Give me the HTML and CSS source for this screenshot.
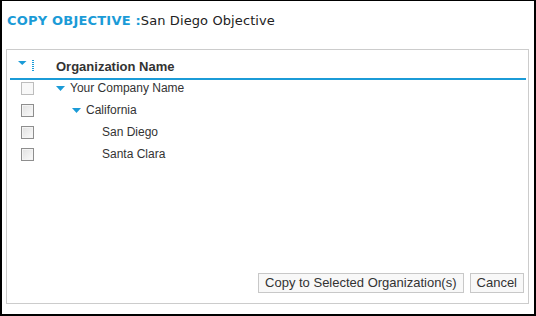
FILE: index.html
```html
<!DOCTYPE html>
<html lang="en">
<head>
    <meta charset="UTF-8">
    <title>Copy Objective</title>
    <link rel="stylesheet" href="styles.css">
</head>
<body>

<div class="dialog">
    <h1 class="dialog-title"><span class="title-label">COPY OBJECTIVE :</span>San Diego Objective</h1>

    <div class="grid-panel">
        <div class="grid-head">
            <div class="col-check">
                <svg class="head-icon" width="17" height="12" viewBox="0 0 17 12">
                    <polygon points="0,1 8.5,1 4.25,5" fill="#1b9bd7"/>
                    <line x1="15" y1="0" x2="15" y2="12" stroke="#1b9bd7" stroke-width="2" stroke-dasharray="1 1"/>
                </svg>
            </div>
            <div class="col-name">Organization Name</div>
        </div>

        <div class="grid-body">
            <div class="grid-row">
                <div class="col-check"><span class="checkbox disabled"></span></div>
                <div class="col-name level-0">
                    <svg class="toggle" width="9" height="5" viewBox="0 0 9 5"><polygon points="0,0 9,0 4.5,5" fill="#1b9bd7"/></svg>
                    Your Company Name
                </div>
            </div>
            <div class="grid-row">
                <div class="col-check"><span class="checkbox"></span></div>
                <div class="col-name level-1">
                    <svg class="toggle" width="9" height="5" viewBox="0 0 9 5"><polygon points="0,0 9,0 4.5,5" fill="#1b9bd7"/></svg>
                    California
                </div>
            </div>
            <div class="grid-row">
                <div class="col-check"><span class="checkbox"></span></div>
                <div class="col-name level-2"><span class="toggle"></span>San Diego</div>
            </div>
            <div class="grid-row">
                <div class="col-check"><span class="checkbox"></span></div>
                <div class="col-name level-2"><span class="toggle"></span>Santa Clara</div>
            </div>
        </div>

        <div class="grid-actions">
            <button type="button">Copy to Selected Organization(s)</button>
            <button type="button">Cancel</button>
        </div>
    </div>
</div>

</body>
</html>
```

FILE: styles.css
```css
body {
    margin: 0;
    background: #fff;
    font-family: 'Liberation Sans', Arial, sans-serif;
}

/* Outer dialog frame */
.dialog {
    width: 536px;
    height: 316px;
    box-sizing: border-box;
    border: 2px solid #000;
    border-top-width: 1px;
    padding-bottom: 10px;
    display: flex;
    flex-direction: column;
    background: #fff;
}

.dialog-title {
    height: 48px;
    box-sizing: border-box;
    margin: 0;
    padding: 11px 5px 0;
    font-family: 'DejaVu Sans', Verdana, sans-serif;
    font-size: 13px;
    font-weight: normal;
    line-height: 18px;
    letter-spacing: 0.1px;
    color: #222;
}

.title-label {
    font-weight: bold;
    letter-spacing: 0.2px;
    color: #1b9bd7;
}

/* Tree grid panel */
.grid-panel {
    flex: 1;
    margin: 0 5px 0 4px;
    border: 1px solid #ccc;
    display: flex;
    flex-direction: column;
}

.grid-head {
    height: 30px;
    box-sizing: border-box;
    margin: 0 2px 0 3px;
    padding-bottom: 4px;
    border-bottom: 2px solid #1b9bd7;
    display: flex;
    align-items: flex-end;
    font-size: 13px;
    font-weight: bold;
    line-height: 15px;
    color: #333;
}

.col-check {
    width: 46px;
    flex-shrink: 0;
    display: flex;
    align-items: center;
}

.grid-head .col-check {
    padding-left: 8px;
    box-sizing: border-box;
}

.head-icon {
    display: block;
    margin-bottom: 2px;
}

.grid-body {
    flex: 1;
    margin: 0 2px 0 3px;
}

.grid-row {
    height: 22px;
    box-sizing: border-box;
    padding-bottom: 6px;
    display: flex;
    align-items: center;
    font-size: 12px;
    color: #333;
}

.grid-row .col-check {
    padding-left: 11px;
    box-sizing: border-box;
}

.checkbox {
    display: block;
    width: 13px;
    height: 13px;
    box-sizing: border-box;
    border: 1px solid #8e8e8e;
    background: linear-gradient(135deg, #e0e0e0, #fbfbfb);
    box-shadow: inset 0 0 0 1px #f4f4f4;
}

.checkbox.disabled {
    border-color: #bdbdbd;
    background: #f8f8f8;
    box-shadow: none;
}

.col-name {
    display: flex;
    align-items: center;
}

.toggle {
    display: block;
    width: 9px;
    height: 5px;
    margin: 1px 5px 0 0;
    flex-shrink: 0;
}

.level-1 { padding-left: 16px; }
.level-2 { padding-left: 32px; }

/* Buttons */
.grid-actions {
    display: flex;
    justify-content: flex-end;
    gap: 6px;
    padding: 0 4px 10px;
}

.grid-actions button {
    height: 20px;
    box-sizing: border-box;
    padding: 0 6px;
    border: 1px solid #c8c8c8;
    background: #f8f8f8;
    font-family: 'Liberation Sans', Arial, sans-serif;
    font-size: 13px;
    line-height: 18px;
    color: #333;
    cursor: pointer;
}

.grid-actions button:hover {
    background: #eee;
}
```
